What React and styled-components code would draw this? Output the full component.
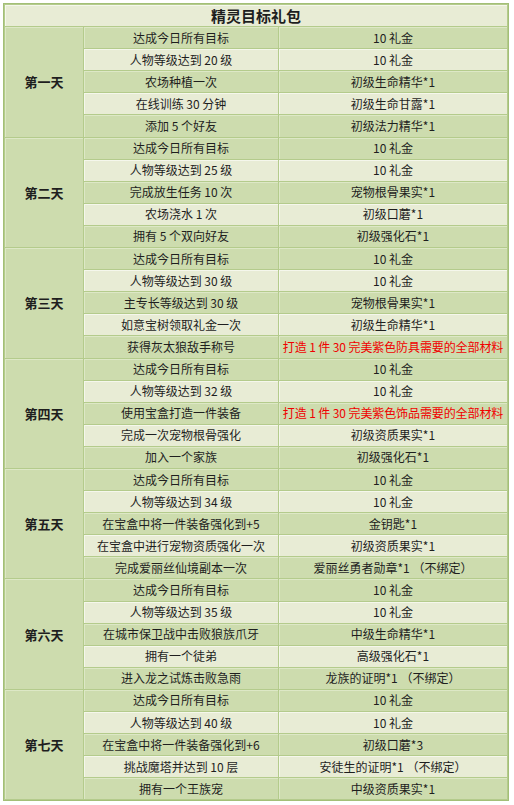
import React from "react";
import styled, { createGlobalStyle } from "styled-components";

const GlobalStyle = createGlobalStyle`
  html, body {
    margin: 0;
    padding: 0;
    background: #ffffff;
  }
  body {
    padding: 3px 0 0 3px;
    font-family: "Liberation Sans", "Noto Sans CJK SC", sans-serif;
  }
`;

const Table = styled.table`
  width: 506px;
  border-collapse: separate;
  border-spacing: 1px;
  background: #b4cb8c;
  border: 1px solid #a3bf77;
  table-layout: fixed;
  color: #1e1e1e;
  font-size: 12px;
`;

const Row = styled.tr`
  height: 21.1px;
`;

const Title = styled.th`
  background: #e8ecd5;
  font-family: "Noto Sans CJK SC", sans-serif;
  font-size: 15px;
  font-weight: 700;
  text-align: center;
  padding: 0;
  box-shadow: inset 1px 1px 0 #f5f7ec;
`;

const DayCell = styled.td`
  background: #cddcae;
  font-family: "Noto Sans CJK SC", sans-serif;
  font-size: 13px;
  font-weight: 700;
  text-align: center;
  padding: 0;
  box-shadow: inset 1px 1px 0 #dde8c6;
`;

const Cell = styled.td`
  background: ${(p) => (p.$dark ? "#cddcae" : "#e8ecd5")};
  color: ${(p) => (p.$red ? "#f00000" : "#1e1e1e")};
  font-family: "Noto Sans CJK SC", sans-serif;
  font-size: 12px;
  line-height: 14px;
  text-align: center;
  white-space: nowrap;
  padding: 0;
  letter-spacing: ${(p) => (p.$red ? "-0.1px" : "0")};
  box-shadow: inset 1px 1px 0 ${(p) => (p.$dark ? "#dde8c6" : "#f5f7ec")};
`;

const days = [
  {
    name: "第一天",
    rows: [
      ["达成今日所有目标", "10 礼金"],
      ["人物等级达到 20 级", "10 礼金"],
      ["农场种植一次", "初级生命精华*1"],
      ["在线训练 30 分钟", "初级生命甘露*1"],
      ["添加 5 个好友", "初级法力精华*1"],
    ],
  },
  {
    name: "第二天",
    rows: [
      ["达成今日所有目标", "10 礼金"],
      ["人物等级达到 25 级", "10 礼金"],
      ["完成放生任务 10 次", "宠物根骨果实*1"],
      ["农场浇水 1 次", "初级口蘑*1"],
      ["拥有 5 个双向好友", "初级强化石*1"],
    ],
  },
  {
    name: "第三天",
    rows: [
      ["达成今日所有目标", "10 礼金"],
      ["人物等级达到 30 级", "10 礼金"],
      ["主专长等级达到 30 级", "宠物根骨果实*1"],
      ["如意宝树领取礼金一次", "初级生命精华*1"],
      ["获得灰太狼敌手称号", "打造 1 件 30 完美紫色防具需要的全部材料", true],
    ],
  },
  {
    name: "第四天",
    rows: [
      ["达成今日所有目标", "10 礼金"],
      ["人物等级达到 32 级", "10 礼金"],
      ["使用宝盒打造一件装备", "打造 1 件 30 完美紫色饰品需要的全部材料", true],
      ["完成一次宠物根骨强化", "初级资质果实*1"],
      ["加入一个家族", "初级强化石*1"],
    ],
  },
  {
    name: "第五天",
    rows: [
      ["达成今日所有目标", "10 礼金"],
      ["人物等级达到 34 级", "10 礼金"],
      ["在宝盒中将一件装备强化到+5", "金钥匙*1"],
      ["在宝盒中进行宠物资质强化一次", "初级资质果实*1"],
      ["完成爱丽丝仙境副本一次", "爱丽丝勇者勋章*1 （不绑定）"],
    ],
  },
  {
    name: "第六天",
    rows: [
      ["达成今日所有目标", "10 礼金"],
      ["人物等级达到 35 级", "10 礼金"],
      ["在城市保卫战中击败狼族爪牙", "中级生命精华*1"],
      ["拥有一个徒弟", "高级强化石*1"],
      ["进入龙之试炼击败急雨", "龙族的证明*1 （不绑定）"],
    ],
  },
  {
    name: "第七天",
    rows: [
      ["达成今日所有目标", "10 礼金"],
      ["人物等级达到 40 级", "10 礼金"],
      ["在宝盒中将一件装备强化到+6", "初级口蘑*3"],
      ["挑战魔塔并达到 10 层", "安徒生的证明*1 （不绑定）"],
      ["拥有一个王族宠", "中级资质果实*1"],
    ],
  },
];

export default function App() {
  return (
    <>
      <GlobalStyle />
      <Table>
        <colgroup>
          <col style={{ width: 78 }} />
          <col style={{ width: 194 }} />
          <col />
        </colgroup>
        <thead>
          <Row>
            <Title colSpan={3}>精灵目标礼包</Title>
          </Row>
        </thead>
        <tbody>
          {days.map((day) =>
            day.rows.map(([goal, reward, red], i) => (
              <Row key={day.name + i}>
                {i === 0 && <DayCell rowSpan={5}>{day.name}</DayCell>}
                <Cell $dark={i % 2 === 0}>{goal}</Cell>
                <Cell $dark={i % 2 === 0} $red={red}>
                  {reward}
                </Cell>
              </Row>
            ))
          )}
        </tbody>
      </Table>
    </>
  );
}
